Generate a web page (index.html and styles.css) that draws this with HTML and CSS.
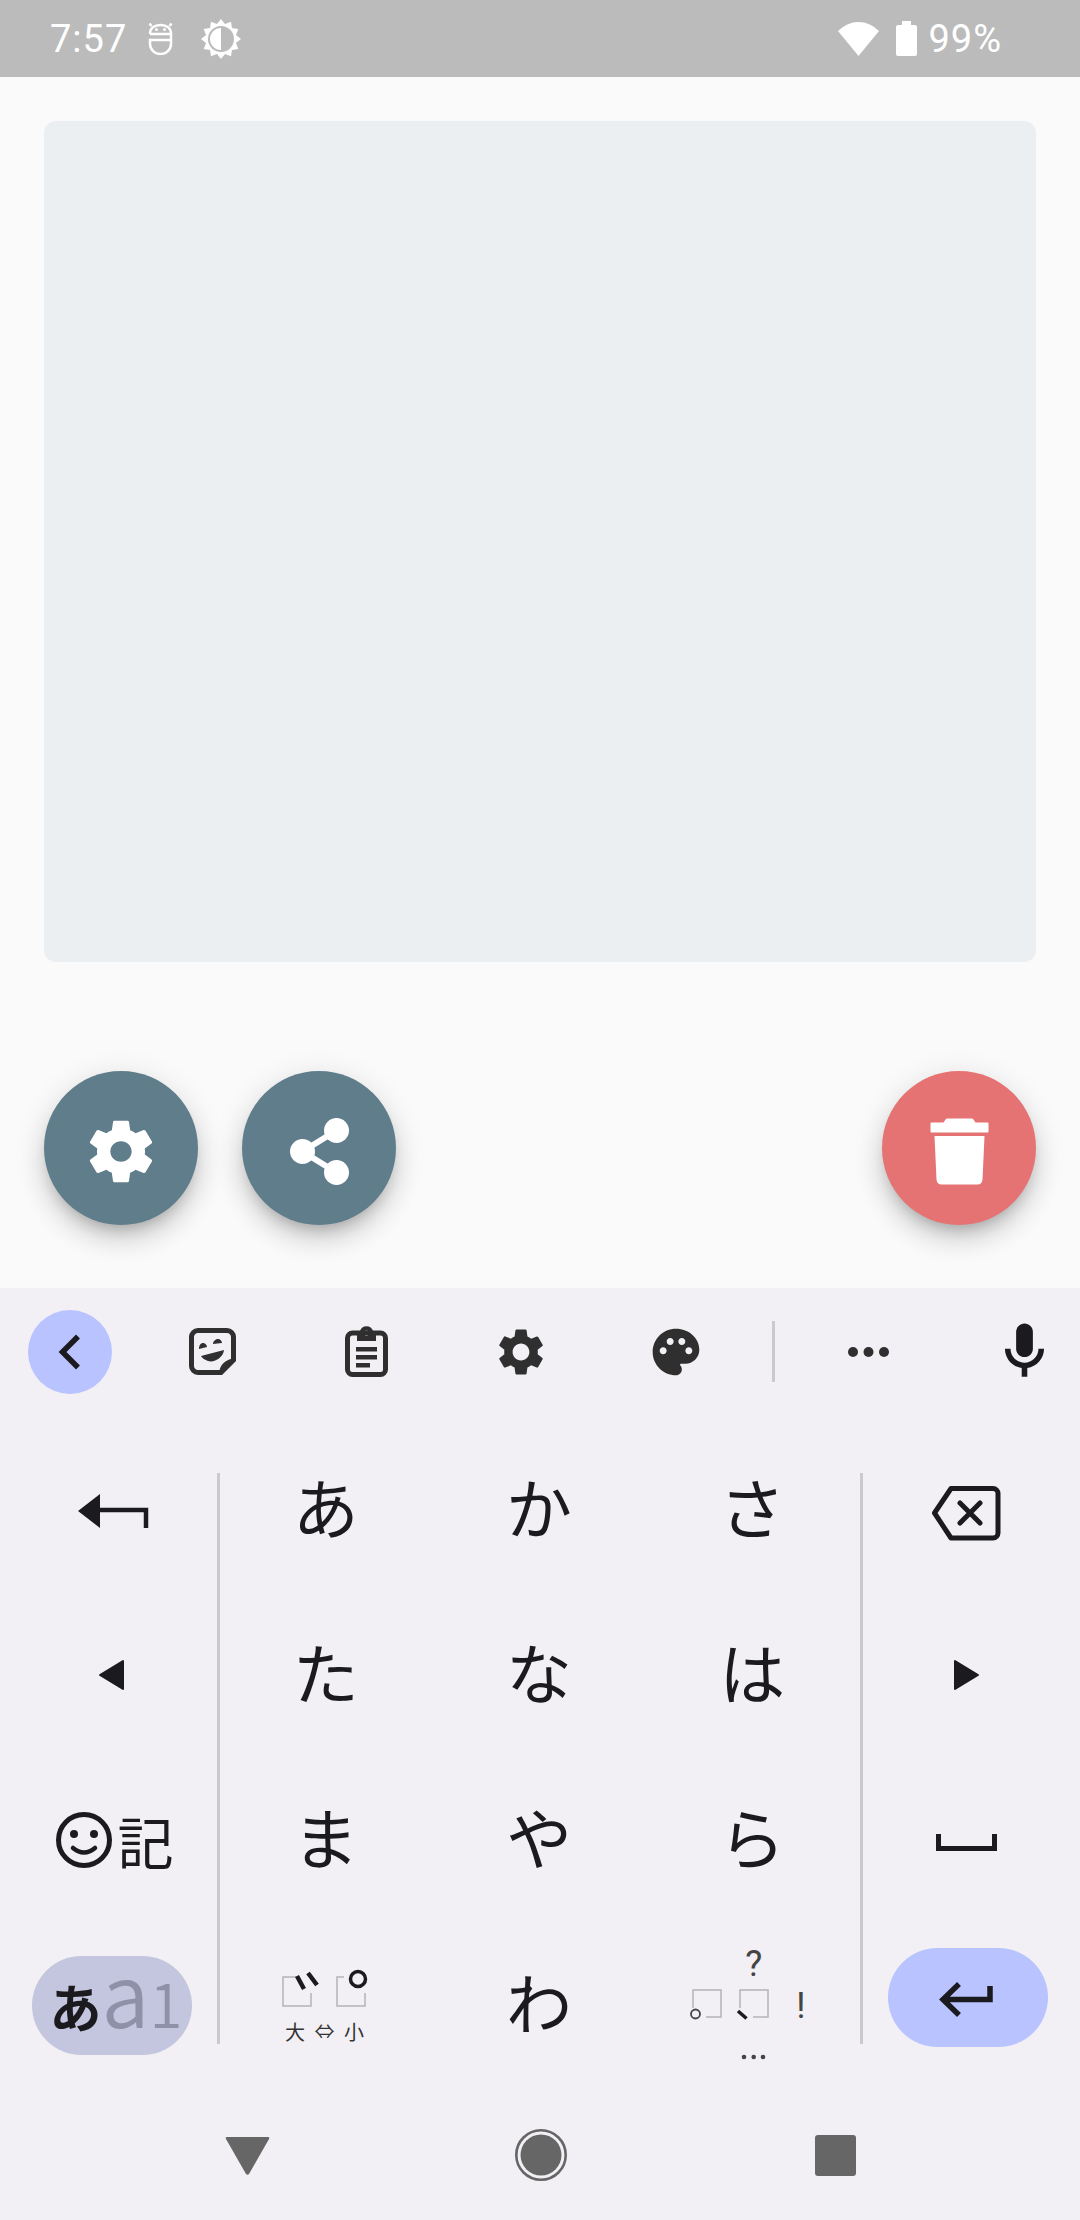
FILE: index.html
```html
<!DOCTYPE html>
<html lang="ja">
<head>
    <meta charset="utf-8">
    <title>Keyboard</title>
    <link rel="stylesheet" href="styles.css">
</head>
<body>
    <div class="status-bar">
        <span class="time">7:57</span>
        <svg class="st-adb" viewBox="0 0 25 33"><path d="M2 12C2 6 6.500 3 12.500 3S23 6 23 12V22a10.500 10 0 0 1-21 0v-4h21M2 12h21M3.500 4 1.500 1.500M21.500 4l2-2.500" fill="none" stroke="#fff" stroke-width="2.500"/><circle cx="8.500" cy="7.500" r="1.500" fill="#fff"/><circle cx="16.500" cy="7.500" r="1.500" fill="#fff"/></svg>
        <svg class="st-bright" viewBox="0 0 40 40"><polygon fill="#fff" points="40,20 34.970,24.010 37.320,30 30.960,30.960 30,37.320 24.010,34.970 20,40 15.990,34.970 10,37.320 9.040,30.960 2.680,30 5.030,24.010 0,20 5.030,15.990 2.680,10 9.040,9.040 10,2.680 15.990,5.030 20,0 24.010,5.030 30,2.680 30.960,9.040 37.320,10 34.970,15.990"/><circle cx="20" cy="20" r="13" fill="#bbb"/><path d="M20 9a11 11 0 0 0 0 22z" fill="#fff"/></svg>
        <span class="spacer"></span>
        <svg class="st-wifi" viewBox="0 0 41 34"><path d="M0 9A28 28 0 0 1 41 9L20.500 34z" fill="#fff"/></svg>
        <svg class="st-battery" viewBox="0 0 21 35"><path d="M6 0h9v4h4a2 2 0 0 1 2 2v27a2 2 0 0 1-2 2H2a2 2 0 0 1-2-2V6a2 2 0 0 1 2-2h4z" fill="#fff"/></svg>
        <span class="percent">99%</span>
    </div>

    <div class="main">
        <div class="canvas"></div>
        <div class="fab-row">
            <button class="fab">
                <svg class="fab-gear" viewBox="0 0 24 24" preserveAspectRatio="none"><path fill="#fff" d="M19.140 12.940c.04-.3.06-.61.06-.94 0-.32-.02-.64-.07-.94l2.030-1.580c.18-.14.23-.41.12-.61l-1.920-3.320c-.12-.22-.37-.29-.59-.22l-2.390.96c-.5-.38-1.030-.7-1.620-.94l-.36-2.540c-.04-.24-.24-.41-.48-.41h-3.840c-.24 0-.43.17-.47.41l-.36 2.540c-.59.24-1.130.57-1.620.94l-2.390-.96c-.22-.08-.47 0-.59.22L2.740 8.870c-.12.21-.08.47.12.61l2.030 1.580c-.05.3-.09.63-.09.94s.02.64.07.94l-2.030 1.580c-.18.14-.23.41-.12.61l1.920 3.320c.12.22.37.29.59.22l2.390-.96c.5.38 1.030.7 1.620.94l.36 2.540c.05.24.24.41.48.41h3.840c.24 0 .44-.17.47-.41l.36-2.540c.59-.24 1.130-.56 1.620-.94l2.390.96c.22.08.47 0 .59-.22l1.920-3.320c.12-.22.07-.47-.12-.61l-2.010-1.580zM12 15.200c-1.760 0-3.200-1.440-3.200-3.200s1.440-3.200 3.200-3.200 3.200 1.440 3.200 3.200-1.440 3.200-3.200 3.200z"/></svg>
            </button>
            <button class="fab">
                <svg viewBox="0 0 77 77"><path d="M55.500 17.500l-34 21 34 21" fill="none" stroke="#fff" stroke-width="6"/><circle cx="55.500" cy="17.500" r="12.500" fill="#fff"/><circle cx="21.500" cy="38.500" r="12.500" fill="#fff"/><circle cx="55.500" cy="59.500" r="12.500" fill="#fff"/></svg>
            </button>
            <span class="spacer"></span>
            <button class="fab fab-danger">
                <svg viewBox="0 0 77 77"><path fill="#fff" d="M10.500 9.500h12l2-3q.5-1 2-1h24q1.500 0 2 1l2 3h12q1 0 1 1v8q0 1-1 1h-56q-1 0-1-1v-8q0-1 1-1zM13.500 23h50l-2 43.500q-.5 5-5 5h-36q-4.500 0-5-5z"/></svg>
            </button>
        </div>
    </div>

    <div class="keyboard">
        <div class="toolbar">
            <button class="tool-back">
                <svg viewBox="0 0 24 36"><path d="M20 2.500 4.500 18 20 33.500" fill="none" stroke="#1b1b1f" stroke-width="5.500"/></svg>
            </button>
            <div class="tool">
                <svg class="ic-sticker" viewBox="0 0 47 47"><path d="M31 44.500H9A6.500 6.500 0 0 1 2.500 38V9A6.500 6.500 0 0 1 9 2.500h29A6.500 6.500 0 0 1 44.500 9v22" fill="none" stroke="#2f2f2f" stroke-width="5"/><path fill="#2f2f2f" d="M30 47c0-10 6-16 17-17v3L33 47zM10 21c0-4 2-6 4-6s4 2 4 4zM24 16c0-3 3-5 5-5s4 2 4 4zM12 28l23-6c-1 8-10 13-16 11-3-1-6-3-7-5z"/></svg>
            </div>
            <div class="tool">
                <svg class="ic-clip" viewBox="0 0 43 51"><rect x="2.500" y="7" width="38" height="41.500" rx="5" fill="none" stroke="#2f2f2f" stroke-width="5"/><path fill="#2f2f2f" fill-rule="evenodd" d="M12 5h3a6.800 6.800 0 0 1 13 0h3v10H12zM21.500 4.500a2.600 2.600 0 1 0 .01 0z"/><path fill="#2f2f2f" d="M11 21h21v4.500H11zM11 29h21v4.500H11zM11 37h14v4.500H11z"/></svg>
            </div>
            <div class="tool">
                <svg class="ic-56" viewBox="0 0 24 24"><path fill="#2f2f2f" d="M19.140 12.940c.04-.3.06-.61.06-.94 0-.32-.02-.64-.07-.94l2.030-1.580c.18-.14.23-.41.12-.61l-1.920-3.320c-.12-.22-.37-.29-.59-.22l-2.390.96c-.5-.38-1.030-.7-1.620-.94l-.36-2.540c-.04-.24-.24-.41-.48-.41h-3.840c-.24 0-.43.17-.47.41l-.36 2.540c-.59.24-1.130.57-1.620.94l-2.390-.96c-.22-.08-.47 0-.59.22L2.740 8.870c-.12.21-.08.47.12.61l2.030 1.580c-.05.3-.09.63-.09.94s.02.64.07.94l-2.030 1.580c-.18.14-.23.41-.12.61l1.920 3.320c.12.22.37.29.59.22l2.390-.96c.5.38 1.030.7 1.620.94l.36 2.540c.05.24.24.41.48.41h3.840c.24 0 .44-.17.47-.41l.36-2.540c.59-.24 1.130-.56 1.620-.94l2.390.96c.22.08.47 0 .59-.22l1.920-3.320c.12-.22.07-.47-.12-.61l-2.010-1.580zM12 15.600c-1.980 0-3.600-1.620-3.600-3.600s1.620-3.600 3.600-3.600 3.600 1.620 3.600 3.600-1.620 3.600-3.600 3.600z"/></svg>
            </div>
            <div class="tool">
                <svg class="ic-56" viewBox="0 0 24 24"><path fill="#2f2f2f" d="M12 2C6.490 2 2 6.490 2 12s4.490 10 10 10c1.380 0 2.500-1.120 2.500-2.500 0-.61-.23-1.200-.64-1.670-.08-.1-.13-.21-.13-.33 0-.28.22-.5.5-.5H16c3.310 0 6-2.690 6-6 0-4.960-4.490-9-10-9zm5.500 11c-.83 0-1.500-.67-1.500-1.500s.67-1.500 1.500-1.500 1.500.67 1.500 1.500-.67 1.500-1.500 1.500zm-3-4c-.83 0-1.500-.67-1.500-1.500S13.670 6 14.500 6s1.500.67 1.500 1.500S15.330 9 14.500 9zM5 11.500c0-.83.67-1.500 1.500-1.500s1.500.67 1.500 1.500S7.330 13 6.500 13 5 12.330 5 11.500zm6-4c0 .83-.67 1.500-1.500 1.500S8 8.330 8 7.500 8.670 6 9.500 6s1.500.67 1.500 1.500z"/></svg>
            </div>
            <div class="tool-sep"></div>
            <div class="tool tool-more">
                <svg class="ic-dots" viewBox="0 0 42 10"><circle cx="5" cy="5" r="5" fill="#2f2f2f"/><circle cx="20.500" cy="5" r="5" fill="#2f2f2f"/><circle cx="36" cy="5" r="5" fill="#2f2f2f"/></svg>
            </div>
            <div class="tool tool-mic">
                <svg class="ic-mic" viewBox="0 0 24 24"><path fill="#1b1b1f" d="M12 14c1.660 0 3-1.340 3-3V5c0-1.660-1.340-3-3-3S9 3.340 9 5v6c0 1.660 1.340 3 3 3z"/><path fill="#1b1b1f" d="M17 11c0 2.760-2.240 5-5 5s-5-2.240-5-5H5c0 3.530 2.610 6.430 6 6.920V21h2v-3.080c3.390-.49 6-3.390 6-6.920h-2z"/></svg>
            </div>
        </div>

        <div class="keys">
            <div class="side-col">
                <div class="key">
                    <svg class="key-svg" viewBox="0 0 125 125"><path d="M32 66 54 49v34z" fill="#1b1b1f"/><path d="M54 65h46v18" fill="none" stroke="#1b1b1f" stroke-width="4.500"/></svg>
                </div>
                <div class="key">
                    <svg class="key-svg" viewBox="0 0 125 125"><path d="M54 65 77 51v28z" fill="#1b1b1f" stroke="#1b1b1f" stroke-width="2" stroke-linejoin="round"/></svg>
                </div>
                <div class="key key-emoji">
                    <svg class="ic-emoji" viewBox="0 0 56 56"><circle cx="28" cy="28" r="25.500" fill="none" stroke="#1b1b1f" stroke-width="5"/><circle cx="18" cy="22" r="4" fill="#1b1b1f"/><circle cx="38" cy="22" r="4" fill="#1b1b1f"/><path d="M17 36q11 9 22 0" fill="none" stroke="#1b1b1f" stroke-width="4.500" stroke-linecap="round"/></svg>
                    <span class="kigou">記</span>
                </div>
                <div class="key key-mode">
                    <div class="mode-pill">
                        <span class="mode-a">あ</span><span class="mode-l">a</span><span class="mode-d">1</span>
                    </div>
                </div>
            </div>

            <div class="key-sep"></div>

            <div class="kana-grid">
                <div class="key kana">あ</div>
                <div class="key kana">か</div>
                <div class="key kana">さ</div>
                <div class="key kana">た</div>
                <div class="key kana">な</div>
                <div class="key kana">は</div>
                <div class="key kana">ま</div>
                <div class="key kana">や</div>
                <div class="key kana">ら</div>
                <div class="key">
                    <svg class="key-svg" viewBox="0 0 125 125">
                        <path d="M32 37H19v29h28V53M73 53V66h28V53M73 53V37h7" fill="none" stroke="#b4b4b8" stroke-width="1.500"/>
                        <path d="M33 36l7 13M44 33l9 12" fill="none" stroke="#1b1b1f" stroke-width="4.500"/>
                        <circle cx="94" cy="39" r="7.500" fill="none" stroke="#1b1b1f" stroke-width="3.500"/>
                        <text class="small-label" x="31" y="100" text-anchor="middle">大</text>
                        <text class="small-label" x="60.500" y="99" text-anchor="middle">⇔</text>
                        <text class="small-label" x="90" y="100" text-anchor="middle">小</text>
                    </svg>
                </div>
                <div class="key kana">わ</div>
                <div class="key">
                    <svg class="key-svg" viewBox="0 0 125 125">
                        <text class="punct" x="62.700" y="36" text-anchor="middle">?</text>
                        <path d="M2 68V50h28v27H15M49 68V50h28v27H62" fill="none" stroke="#b4b4b8" stroke-width="1.500"/>
                        <circle cx="4.500" cy="74" r="4.500" fill="none" stroke="#444" stroke-width="1.800"/>
                        <path d="M47 71l8.500 7.500" stroke="#1b1b1f" stroke-width="3.500"/>
                        <text class="punct" x="110" y="78" text-anchor="middle">!</text>
                        <circle cx="53" cy="117" r="2.300" fill="#444"/><circle cx="62.700" cy="117" r="2.300" fill="#444"/><circle cx="72" cy="117" r="2.300" fill="#444"/>
                    </svg>
                </div>
            </div>

            <div class="key-sep"></div>

            <div class="side-col">
                <div class="key">
                    <svg class="key-svg" viewBox="0 0 125 125"><path d="M42 43.500h42a5 5 0 0 1 5 5V88a5 5 0 0 1-5 5H42L25.500 68z" fill="none" stroke="#1b1b1f" stroke-width="5" stroke-linejoin="round"/><path d="M51 58l20 20M71 58 51 78" stroke="#1b1b1f" stroke-width="5" stroke-linecap="round"/></svg>
                </div>
                <div class="key">
                    <svg class="key-svg" viewBox="0 0 125 125"><path d="M69 65 46 51v28z" fill="#1b1b1f" stroke="#1b1b1f" stroke-width="2" stroke-linejoin="round"/></svg>
                </div>
                <div class="key">
                    <svg class="key-svg" viewBox="0 0 125 125"><path d="M29.500 59v14.500h56V59" fill="none" stroke="#1b1b1f" stroke-width="5"/></svg>
                </div>
                <div class="key key-enter">
                    <div class="enter-pill">
                        <svg class="ic-enter" viewBox="0 0 56 40"><path d="M21 4 5 19.500 21 35M5 19.500h47V6" fill="none" stroke="#1b1b1f" stroke-width="5.500"/></svg>
                    </div>
                </div>
            </div>
        </div>

        <div class="nav-bar">
            <div class="nav-slot">
                <svg class="nav-back" viewBox="0 0 45 39"><path d="M2 1h41q2 0 1 2L24 38q-1.500 1.500-3 0L1 3Q0 1 2 1z" fill="#666"/></svg>
            </div>
            <div class="nav-slot">
                <svg class="nav-home" viewBox="0 0 52 52"><circle cx="26" cy="26" r="24.700" fill="none" stroke="#666" stroke-width="2.600"/><circle cx="26" cy="26" r="20.500" fill="#666"/></svg>
            </div>
            <div class="nav-slot">
                <div class="nav-recent"></div>
            </div>
        </div>
    </div>
</body>
</html>
```

FILE: styles.css
```css
* {
    box-sizing: border-box;
}

body {
    margin: 0;
    width: 1080px;
    height: 2220px;
    overflow: hidden;
    background-color: #fafafa;
    font-family: "Noto Sans CJK JP", "Noto Sans", sans-serif;
    color: #1b1b1f;
}

button {
    border: none;
    padding: 0;
}

svg {
    display: block;
}

.spacer {
    flex: 1;
}

/* status bar */
.status-bar {
    height: 77px;
    background-color: #bbb;
    display: flex;
    align-items: center;
    padding: 0 78px 0 50px;
    color: #fff;
    font-family: Roboto, sans-serif;
    font-size: 38px;
    letter-spacing: 1px;
}

.time {
    width: 98px;
}

.st-adb {
    width: 25px;
    height: 33px;
}

.st-bright {
    width: 40px;
    height: 40px;
    margin-left: 28px;
}

.st-wifi {
    width: 41px;
    height: 34px;
    margin-top: 1px;
}

.st-battery {
    width: 21px;
    height: 35px;
    margin-left: 17px;
}

.percent {
    margin-left: 11px;
}

/* main area */
.main {
    height: 1211px;
    padding: 44px 44px 0;
}

.canvas {
    height: 841px;
    background-color: #eceff1;
    border-radius: 12px;
}

.fab-row {
    display: flex;
    gap: 44px;
    margin-top: 109px;
}

.fab {
    width: 154px;
    height: 154px;
    border-radius: 50%;
    background-color: #607d8b;
    display: flex;
    align-items: center;
    justify-content: center;
    padding-top: 7px;
    box-shadow: 0 10px 14px -6px rgba(0, 0, 0, .22), 0 16px 24px 2px rgba(0, 0, 0, .1), 0 6px 30px 5px rgba(0, 0, 0, .07);
}

.fab svg {
    width: 77px;
    height: 77px;
}

.fab .fab-gear {
    width: 80px;
}

.fab-danger {
    background-color: #e57373;
}

/* keyboard */
.keyboard {
    height: 932px;
    background-color: #f2f0f4;
}

.toolbar {
    height: 137px;
    display: flex;
    align-items: center;
    padding: 0 0 10px 28px;
}

.tool-back {
    width: 84px;
    height: 84px;
    border-radius: 50%;
    background-color: #b8c3ff;
    margin-right: 23px;
    display: flex;
    align-items: center;
    justify-content: center;
}

.tool-back svg {
    width: 24px;
    height: 36px;
}

.tool {
    width: 154.500px;
    display: flex;
    justify-content: center;
}

.tool-sep {
    width: 3px;
    height: 61px;
    margin: 0 0 0 19px;
    background-color: #cbc9cd;
}

.tool-more {
    width: 188px;
}

.tool-mic {
    width: 112px;
    margin-left: 5px;
}

.ic-sticker {
    width: 47px;
    height: 47px;
}

.ic-clip {
    width: 43px;
    height: 51px;
}

.ic-56 {
    width: 56px;
    height: 56px;
}

.ic-dots {
    width: 42px;
    height: 10px;
}

.ic-mic {
    width: 67px;
    height: 67px;
}

.keys {
    height: 660px;
    display: flex;
}

.side-col {
    width: 217px;
}

.key-sep {
    width: 3px;
    height: 571px;
    margin-top: 48px;
    background-color: #cbc9cd;
}

.kana-grid {
    width: 640px;
    display: grid;
    grid-template-columns: repeat(3, 1fr);
}

.key {
    height: 165px;
    display: flex;
    align-items: center;
    justify-content: center;
}

.key-svg {
    width: 125px;
    height: 125px;
    overflow: visible;
}

.kana {
    font-size: 66px;
    line-height: 1;
    padding: 0 2px 6px 0;
}

.key-emoji {
    gap: 6px;
    padding: 5px 0 0 12px;
}

.ic-emoji {
    width: 56px;
    height: 56px;
}

.kigou {
    font-size: 56px;
    line-height: 1;
}

.key-mode {
    padding: 6px 0 0 7px;
}

.mode-pill {
    width: 160px;
    height: 99px;
    border-radius: 50px;
    background-color: #c3c6de;
    display: flex;
    align-items: baseline;
    justify-content: center;
    padding: 13px 0 0 8px;
    line-height: .5;
    color: #8e91a7;
}

.mode-a {
    font-size: 52px;
    font-weight: 700;
    color: #1b1b1f;
}

.mode-l {
    font-size: 86px;
    font-weight: 350;
}

.mode-d {
    font-size: 60px;
    font-weight: 350;
}

.key-enter {
    padding: 0 7px 10px 0;
}

.enter-pill {
    width: 160px;
    height: 99px;
    border-radius: 50px;
    background-color: #b8c3ff;
    display: flex;
    align-items: center;
    justify-content: center;
}

.ic-enter {
    width: 56px;
    height: 40px;
    margin: 4px 4px 0 0;
}

.small-label {
    font-size: 20px;
    fill: #333;
}

.punct {
    font-family: Roboto, sans-serif;
    font-size: 36px;
    fill: #444;
}

/* navigation */
.nav-bar {
    height: 135px;
    display: flex;
    align-items: center;
    padding: 5px 0 0 100px;
}

.nav-slot {
    width: 294px;
    display: flex;
    justify-content: center;
}

.nav-back {
    width: 45px;
    height: 39px;
}

.nav-home {
    width: 52px;
    height: 52px;
}

.nav-recent {
    width: 41px;
    height: 41px;
    background-color: #666;
    border-radius: 3px;
}
```
